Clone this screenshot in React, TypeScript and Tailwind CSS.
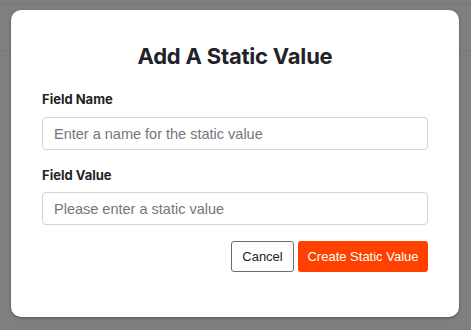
export default function App() {
  return (
    <div className="relative w-[471px] h-[330px] bg-[#7f7f7f] overflow-hidden font-['Inter',sans-serif]">
      <div className="absolute inset-x-0 top-[4px] h-px bg-[#787878]" />
      <div className="absolute inset-x-0 top-[50px] h-px bg-[#787878]" />
      <div className="absolute top-0 left-[286px] h-[5px] w-px bg-[#777777]" />
      <div className="absolute left-[11px] top-[10px] w-[448px] h-[307px] bg-white rounded-[10px] shadow-[0_1px_3px_rgba(0,0,0,0.35)] px-[31px] pt-[31px]">
        <h2 className="text-center text-[22px] leading-[30px] font-bold text-[#1f2328] tracking-[-0.2px]">
          Add A Static Value
        </h2>
        <div className="mt-[19px] flex flex-col">
          <label className="text-[13px] leading-[18px] font-bold text-[#1f2328]">Field Name</label>
          <input
            className="mt-[9px] h-[33px] w-full rounded-[4px] border border-[#ced4da] px-[11px] text-[14.5px] font-['Liberation_Sans',Arial,sans-serif] placeholder:text-[#73767b] outline-none"
            placeholder="Enter a name for the static value"
          />
          <label className="mt-[16px] text-[13px] leading-[18px] font-bold text-[#1f2328]">Field Value</label>
          <input
            className="mt-[8px] h-[33px] w-full rounded-[4px] border border-[#ced4da] px-[11px] text-[14.5px] font-['Liberation_Sans',Arial,sans-serif] placeholder:text-[#73767b] outline-none"
            placeholder="Please enter a static value"
          />
        </div>
        <div className="mt-[16px] flex justify-end gap-[4px] font-['Liberation_Sans',Arial,sans-serif] text-[13px]">
          <button className="h-[31px] w-[63px] rounded-[3px] border border-[#6b6b6b] bg-white text-[#222]">Cancel</button>
          <button className="h-[31px] w-[130px] rounded-[3px] bg-[#ff4100] text-white">Create Static Value</button>
        </div>
      </div>
    </div>
  );
}
